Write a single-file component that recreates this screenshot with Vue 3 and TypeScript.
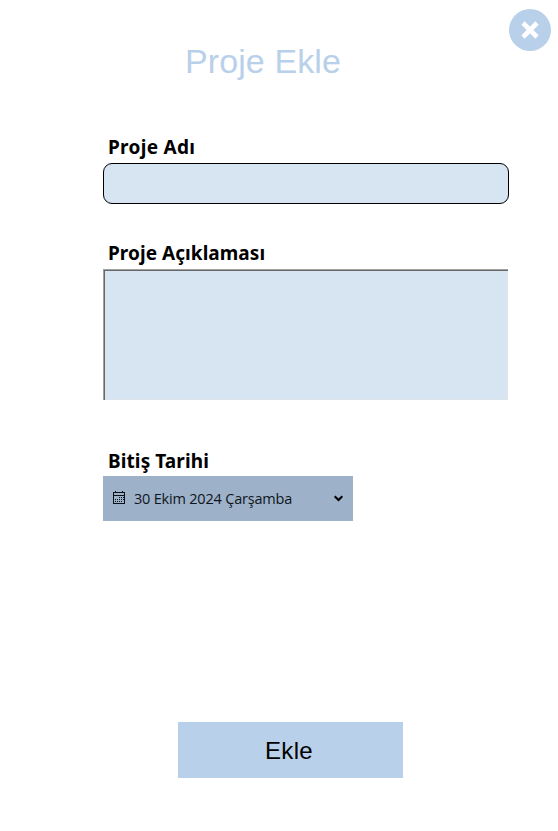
<script setup lang="ts">
import { ref } from 'vue'

const projectName = ref('')
const description = ref('')
const endDate = ref('30 Ekim 2024 Çarşamba')
const dots: [number, number][] = [
  [6, 6], [8, 6], [10, 6],
  [2, 8], [4, 8], [6, 8], [8, 8], [10, 8],
  [2, 10], [4, 10], [6, 10], [8, 10],
]
</script>

<template>
  <main class="dialog">
    <button class="close" type="button" aria-label="Kapat">
      <svg width="42" height="42" viewBox="0 0 42 42">
        <circle cx="21" cy="21" r="21" fill="#b9d0ea" />
        <path d="M14 14L28 28M28 14L14 28" stroke="#fff" stroke-width="4.6" />
      </svg>
    </button>
    <h1 class="title">Proje Ekle</h1>
    <form class="form" @submit.prevent>
      <label class="label name-label" for="name">Proje Adı</label>
      <input id="name" v-model="projectName" class="name" type="text" />
      <label class="label desc-label" for="desc">Proje Açıklaması</label>
      <textarea id="desc" v-model="description" class="desc"></textarea>
      <span class="label date-label">Bitiş Tarihi</span>
      <button class="date" type="button">
        <svg class="calendar" width="12" height="13" viewBox="0 0 12 13" shape-rendering="crispEdges">
          <path d="M.5 1.5h11v11H.5zM0 4.5h12M2.5 0v2M9.5 0v2" fill="none" stroke="#0b0f18" />
          <rect v-for="([x, y], i) in dots" :key="i" :x="x" :y="y" width="1" height="1" fill="#0b0f18" />
        </svg>
        <span class="date-text">{{ endDate }}</span>
        <svg class="chevron" width="9" height="7" viewBox="0 0 9 7">
          <path d="M.7 1.2L4.5 5L8.3 1.2" fill="none" stroke="#000" stroke-width="2" />
        </svg>
      </button>
      <button class="submit" type="submit">Ekle</button>
    </form>
  </main>
</template>

<style>
body {
  background: #fff;
}
</style>

<style scoped>
.dialog {
  position: relative;
  box-sizing: border-box;
  width: 558px;
  height: 831px;
  padding-top: 41px;
  background: #fff;
}
button {
  margin: 0;
  padding: 0;
  border: 0;
  border-radius: 0;
}
.close {
  position: absolute;
  top: 9px;
  right: 7px;
  width: 42px;
  height: 42px;
  background: none;
}
.close svg {
  display: block;
}
.title {
  margin: 0 0 0 185px;
  height: 40px;
  font: 400 34px/40px "Liberation Sans", sans-serif;
  letter-spacing: 0.1px;
  color: #b9d0ea;
}
.form {
  display: flex;
  flex-direction: column;
  align-items: flex-start;
  padding: 52px 0 0 103px;
}
.label {
  height: 28px;
  padding-left: 5px;
  font: 700 19px/28px "Noto Sans", sans-serif;
  color: #000;
  white-space: nowrap;
}
.name-label {
  margin-bottom: 2px;
  letter-spacing: 0.3px;
}
.name {
  box-sizing: border-box;
  width: 406px;
  height: 41px;
  margin: 0 0 35px;
  padding: 0 10px;
  border: 1px solid #000;
  border-radius: 9px;
  background: #d7e4f2;
  outline: none;
}
.desc-label {
  margin-bottom: 2px;
  letter-spacing: 0.05px;
}
.desc {
  box-sizing: border-box;
  width: 405px;
  height: 131px;
  margin: 0 0 47px;
  padding: 4px;
  border: 0;
  box-shadow: inset 1px 1px #a0a0a0, inset 2px 2px #696969, inset -1px -1px #dce4ea;
  background: #d7e4f2;
  resize: none;
  outline: none;
}
.date-label {
  margin-bottom: 1px;
  letter-spacing: 0.1px;
}
.date {
  display: flex;
  align-items: center;
  width: 250px;
  height: 45px;
  padding: 0 10px;
  background: #9db1c8;
  color: #10151d;
}
.calendar {
  margin: 0 9px 2px 0;
}
.date-text {
  font: 400 14.5px/20px "Open Sans", sans-serif;
  letter-spacing: -0.2px;
  white-space: nowrap;
}
.chevron {
  margin-left: auto;
}
.submit {
  width: 225px;
  height: 56px;
  margin: 201px 0 0 75px;
  padding: 1px 3px 0 0;
  background: #b9d0ea;
  color: #000;
  font: 400 24px/55px "Liberation Sans", sans-serif;
  letter-spacing: 0.3px;
}
</style>
